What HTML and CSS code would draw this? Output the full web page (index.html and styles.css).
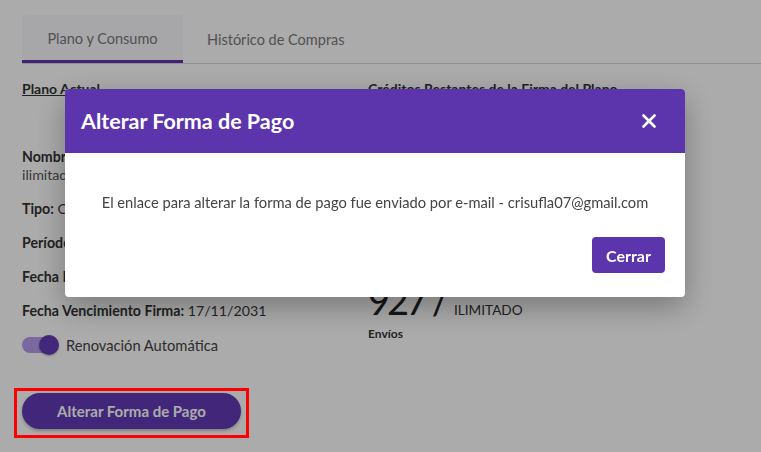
FILE: index.html
```html
<!DOCTYPE html>
<html lang="es">
<head>
<meta charset="utf-8">
<link rel="stylesheet" href="styles.css">
</head>
<body>
<div class="page">
  <div class="tabs">
    <div class="tab active">Plano y Consumo</div>
    <div class="tab">Histórico de Compras</div>
  </div>
  <div class="columns">
    <div class="col left">
      <div class="heading u">Plano Actual</div>
      <div class="field first"><b>Nombre:</b><br><span class="light">ilimitado</span></div>
      <div class="field"><b>Tipo:</b> Com</div>
      <div class="field"><b>Período:</b></div>
      <div class="field"><b>Fecha Inicio:</b></div>
      <div class="field"><b>Fecha Vencimiento Firma:</b> 17/11/2031</div>
      <div class="toggle-row">
        <span class="toggle"><span class="knob"></span></span>
        <span>Renovación Automática</span>
      </div>
      <button class="pill">Alterar Forma de Pago</button>
    </div>
    <div class="col right">
      <div class="heading">Créditos Restantes de la Firma del Plano</div>
      <div class="big-row"><span class="big">927 /</span><span class="unl">ILIMITADO</span></div>
      <div class="small-b">Envíos</div>
    </div>
  </div>
</div>

<div class="overlay">
  <div class="dialog">
    <div class="dialog-head">
      <span class="dialog-title">Alterar Forma de Pago</span>
      <svg class="close" width="14" height="14" viewBox="0 0 14 14"><path d="M1.5 1.5L12.5 12.5M12.5 1.5L1.5 12.5" stroke="#fff" stroke-width="2.6" stroke-linecap="round"/></svg>
    </div>
    <div class="dialog-body">
      <p class="msg">El enlace para alterar la forma de pago fue enviado por e-mail - crisufla07@gmail.com</p>
      <div class="actions"><button class="btn">Cerrar</button></div>
    </div>
  </div>
</div>
<div class="mark"></div>
</body>
</html>
```
FILE: styles.css
```css
* { box-sizing: border-box; }
html, body { margin: 0; height: 100%; }
body {
  font-family: Lato, "Noto Sans", sans-serif;
  background: #fff;
  color: #333;
  overflow: hidden;
}
.page { padding: 15px 0 0 22px; }
.tabs {
  display: flex;
  border-bottom: 1px solid #d7d7d7;
  height: 49px;
}
.tab {
  height: 48px;
  padding: 0 24px;
  display: flex;
  align-items: center;
  font-size: 14.5px;
  color: #7a7a7a;
  border-radius: 4px 4px 0 0;
}
.tab.active {
  width: 161px;
  justify-content: center;
  background: #faf8fd;
  border-bottom: 3px solid #5e37af;
  padding-top: 2px;
}
.columns { display: flex; }
.col.left { width: 346px; }
.heading {
  font-size: 14px;
  font-weight: 700;
  margin-top: 16px;
  color: #333;
}
.u { text-decoration: underline; }
.field { font-size: 14.2px; margin-top: 16px; line-height: 18px; color: #3a3a3a; }
.field b { font-weight: 700; color: #333; }
.field.first { margin-top: 51px; }
.light { color: #555; }
.toggle-row {
  display: flex;
  align-items: center;
  gap: 8px;
  margin-top: 16px;
  font-size: 14.7px;
  color: #444;
}
.toggle {
  position: relative;
  width: 36px;
  height: 16px;
  border-radius: 8px;
  background: #b79bee;
  display: inline-block;
}
.knob {
  position: absolute;
  right: -1px;
  top: -2px;
  width: 20px;
  height: 20px;
  border-radius: 50%;
  background: #643bb8;
  box-shadow: 0 1px 2px rgba(0,0,0,0.3);
}
.pill {
  margin-top: 39px;
  width: 219px;
  height: 36px;
  border: 0;
  border-radius: 18px;
  background: #633ab6;
  color: #fff;
  font-family: inherit;
  font-size: 15px;
  font-weight: 700;
  box-shadow: 0 2px 3px rgba(0,0,0,0.25);
}
.big-row { margin-top: 183px; display: flex; align-items: baseline; gap: 8px; }
.big { font-size: 38px; color: #222; letter-spacing: -3px; line-height: 40px; }
.unl { font-size: 13.6px; color: #333; }
.small-b { font-size: 12px; font-weight: 700; margin-top: 6px; color: #333; }

.overlay {
  position: fixed;
  inset: 0;
  background: rgba(0,0,0,0.33);
  padding: 89px 0 0 65px;
}
.dialog {
  width: 620px;
  height: 208px;
  background: #fff;
  border-radius: 4px;
  overflow: hidden;
  box-shadow: 0 10px 30px rgba(0,0,0,0.3);
}
.dialog-head {
  height: 64px;
  background: #5c35ad;
  display: flex;
  align-items: center;
  justify-content: space-between;
  padding: 0 29px 0 16px;
}
.dialog-title { color: #fff; font-size: 21.5px; font-weight: 700; }
.close { display: block; }
.dialog-body { padding: 40px 20px 0; }
.msg {
  margin: 0;
  text-align: center;
  font-size: 14.7px;
  color: #444;
}
.actions { display: flex; justify-content: flex-end; margin-top: 26px; }
.btn {
  width: 73px;
  height: 36px;
  border: 0;
  border-radius: 4px;
  background: #5c35ad;
  color: #fff;
  font-family: inherit;
  font-size: 16px;
  font-weight: 700;
}
.mark {
  position: fixed;
  left: 14px;
  top: 388px;
  width: 235px;
  height: 50px;
  border: 3px solid #ff0000;
}
```
